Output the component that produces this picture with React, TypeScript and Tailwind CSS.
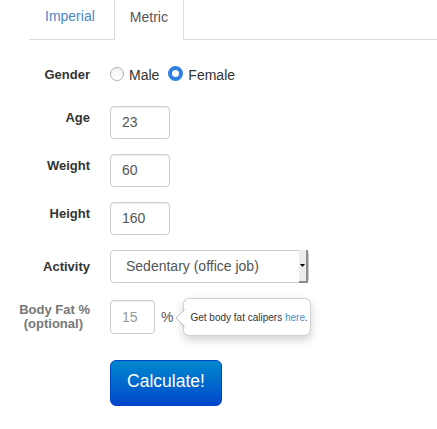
import React from "react";

const font = { fontFamily: '"Liberation Sans", Arial, sans-serif' };

function Label({ children, pt }: { children: React.ReactNode; pt: string }) {
  return (
    <div className={`w-[90px] shrink-0 text-right text-[13px] font-bold leading-[20px] text-[#333] ${pt}`}>
      {children}
    </div>
  );
}

function TextInput({ value, w, h, muted }: { value: string; w: string; h: string; muted?: boolean }) {
  return (
    <div
      className={`${w} ${h} flex items-center rounded-[4px] border border-[#cccccc] bg-white pl-[11px] text-[14px] shadow-[inset_0_1px_1px_rgba(0,0,0,0.075)] ${
        muted ? "text-[#999]" : "text-[#555]"
      }`}
    >
      {value}
    </div>
  );
}

export default function App() {
  return (
    <div className="w-[437px] h-[429px] overflow-hidden bg-white" style={font}>
      {/* Tabs */}
      <div className="ml-[29px] flex h-[40px] items-end border-b border-[#dddddd]">
        <div className="mr-[3px] h-[39px] border border-transparent px-[15px] pt-[5px] text-[14px] leading-[20px] text-[#4a89c8]">
          Imperial
        </div>
        <div className="-mb-px h-[43px] rounded-t-[4px] border border-b-0 border-[#dddddd] bg-white px-[15px] pt-[9px] text-[14px] leading-[20px] text-[#555]">
          Metric
        </div>
      </div>

      {/* Form */}
      <div className="flex flex-col">
        {/* Gender */}
        <div className="mt-[25px] flex h-[20px] items-start">
          <Label pt="pt-0">Gender</Label>
          <div className="ml-[20px] flex items-center text-[14px] leading-[20px] text-[#333]">
            <span className="-mt-[3px] box-border h-[14px] w-[14px] rounded-full border border-[#b5b0aa] bg-gradient-to-b from-[#f2f2f2] to-white" />
            <span className="ml-[5px]">Male</span>
            <span className="-mt-[3px] ml-[9px] box-border h-[15px] w-[15px] rounded-full border-[4px] border-[#2f7fe0] bg-white" />
            <span className="ml-[5px]">Female</span>
          </div>
        </div>

        {/* Age */}
        <div className="mt-[21px] flex items-start">
          <Label pt="pt-[2px]">Age</Label>
          <div className="ml-[20px]">
            <TextInput value="23" w="w-[60px]" h="h-[33px]" />
          </div>
        </div>

        {/* Weight */}
        <div className="mt-[15px] flex items-start">
          <Label pt="pt-[2px]">Weight</Label>
          <div className="ml-[20px]">
            <TextInput value="60" w="w-[60px]" h="h-[33px]" />
          </div>
        </div>

        {/* Height */}
        <div className="mt-[15px] flex items-start">
          <Label pt="pt-[2px]">Height</Label>
          <div className="ml-[20px]">
            <TextInput value="160" w="w-[60px]" h="h-[33px]" />
          </div>
        </div>

        {/* Activity */}
        <div className="mt-[15px] flex items-start">
          <Label pt="pt-[7px]">Activity</Label>
          <div className="ml-[20px] flex h-[33px] w-[199px] items-stretch rounded-[4px] border border-[#cccccc] bg-white">
            <div className="flex flex-1 items-center pl-[15px] text-[14px] text-[#555]">Sedentary (office job)</div>
            <div className="my-[-1px] mr-0 flex w-[9px] items-center justify-center border-b-[2px] border-r-[2px] border-[#8c8c8c] bg-[#ececec]">
              <svg width="5" height="3" viewBox="0 0 5 3">
                <path d="M0 0 H5 L2.5 3 Z" fill="#000" />
              </svg>
            </div>
          </div>
        </div>

        {/* Body fat */}
        <div className="mt-[15px] flex items-start">
          <div className="w-[90px] shrink-0 pt-[5px] text-right text-[13px] font-bold leading-[14px] text-[#777]">
            <div>Body Fat %</div>
            <div className="pr-[7px]">(optional)</div>
          </div>
          <div className="ml-[20px] flex items-center">
            <TextInput value="15" w="w-[45px]" h="h-[34px]" muted />
            <span className="ml-[6px] text-[14px] text-[#555]">%</span>
            <div className="relative ml-[10px] flex h-[38px] w-[128px] items-center rounded-[6px] border border-[rgba(0,0,0,0.18)] bg-white pl-[6px] text-[10px] text-[#333] shadow-[0_4px_10px_rgba(0,0,0,0.18)]">
              <svg className="absolute left-[-9px] top-[10px]" width="10" height="18" viewBox="0 0 10 18">
                <path d="M10 0 L1 9 L10 18" fill="#fff" stroke="rgba(0,0,0,0.25)" strokeWidth="1" />
                <rect x="9.5" y="0.5" width="2" height="17" fill="#fff" />
              </svg>
              <span>
                Get body fat calipers <span className="text-[#428bca]">here</span>.
              </span>
            </div>
          </div>
        </div>

        {/* Button */}
        <div className="mt-[24px] ml-[110px]">
          <div className="flex h-[46px] w-[112px] justify-center rounded-[6px] border border-[#0044cc] bg-gradient-to-b from-[#0088cc] to-[#0044cc] pt-[10px] text-[17.5px] leading-[20px] text-white">
            Calculate!
          </div>
        </div>
      </div>
    </div>
  );
}
